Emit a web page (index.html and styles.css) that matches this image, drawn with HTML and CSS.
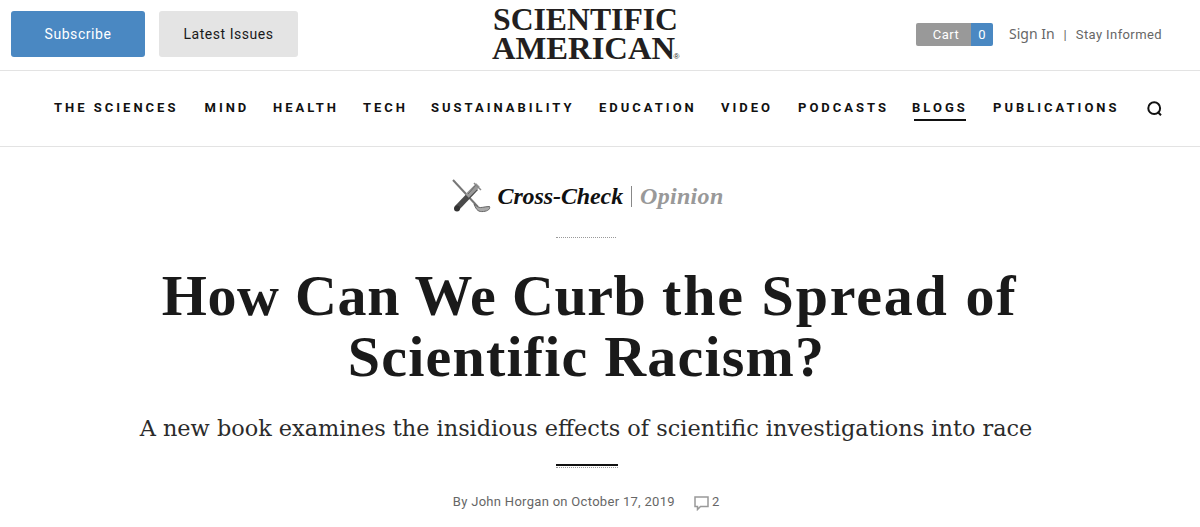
FILE: index.html
```html
<!DOCTYPE html>
<html lang="en">
<head>
    <meta charset="UTF-8">
    <meta name="viewport" content="width=device-width, initial-scale=1.0">
    <title>How Can We Curb the Spread of Scientific Racism? - Scientific American</title>
    <link rel="stylesheet" href="styles.css">
</head>
<body>
    <header class="top-bar">
        <div class="top-left">
            <a class="btn btn-subscribe">Subscribe</a>
            <a class="btn btn-issues">Latest Issues</a>
        </div>
        <svg class="logo" width="192" height="60" viewBox="0 0 192 60">
            <text x="3" y="26" font-size="32" textLength="185" lengthAdjust="spacingAndGlyphs">SCIENTIFIC</text>
            <text x="2" y="54.5" font-size="32" textLength="183" lengthAdjust="spacingAndGlyphs">AMERICAN</text>
            <text class="reg" x="183.5" y="55" font-size="8">®</text>
        </svg>
        <div class="top-right">
            <a class="cart"><span class="cart-label">Cart</span><span class="cart-count">0</span></a>
            <a class="sign-in">Sign In</a>
            <span class="divider">|</span>
            <a class="stay">Stay Informed</a>
        </div>
    </header>

    <nav class="main-nav">
        <a>The Sciences</a>
        <a>Mind</a>
        <a>Health</a>
        <a>Tech</a>
        <a>Sustainability</a>
        <a>Education</a>
        <a>Video</a>
        <a>Podcasts</a>
        <a><span class="active">Blogs</span></a>
        <a>Publications</a>
        <svg class="search" width="16" height="16" viewBox="0 0 16 16">
            <circle cx="7.2" cy="7.2" r="5.9"/>
            <path d="M10.6 10.8l3.4 3.4"/>
        </svg>
    </nav>

    <main class="article">
        <div class="blog-title">
            <svg class="sticks" width="40" height="36" viewBox="0 0 40 36">
                <path d="M2 2L27 29" stroke="#777" stroke-width="2"/>
                <path d="M6 30L25 10" stroke="#4a4a4a" stroke-width="5.5"/>
                <path d="M16 18L27 7" stroke="#999" stroke-width="5"/>
                <path d="M17 16L25 7" stroke="#666" stroke-width="1"/>
                <path d="M23 5L30 12" stroke="#888" stroke-width="1.5"/>
                <circle cx="6" cy="30.5" r="3" fill="#333"/>
                <path d="M23 26l4 3c3 1.500 6-.5 11.500-.5 1 2.500-1.500 4.500-6 5-5 .5-7-1-9.500-7.500z" fill="#aaa" stroke="#666" stroke-width="1"/>
            </svg>
            <span class="blog-name">Cross-Check</span>
            <span class="blog-bar"></span>
            <span class="blog-kind">Opinion</span>
        </div>
        <div class="rule-dotted"></div>
        <h1><span class="line-one">How Can We Curb <span class="wide">the Spread of</span></span><br><span class="line-two">Scientific Racism?</span></h1>
        <p class="subtitle">A new book examines the insidious effects of scientific investigations into race</p>
        <div class="rule-solid"></div>
        <div class="meta">
            <span class="byline">By John Horgan on October 17, 2019</span>
            <svg class="comment" width="15" height="15" viewBox="0 0 15 15">
                <path d="M1 1h13v9.500H6.500L3.500 13.500v-3H1z"/>
            </svg>
            <span class="count">2</span>
        </div>
    </main>
</body>
</html>
```
FILE: styles.css
```css
body {
    margin: 0;
    background: #fff;
    color: #1a1a1a;
    font-family: Roboto, "Liberation Sans", sans-serif;
    font-size: 14px;
    overflow: hidden;
}

.top-bar {
    height: 71px;
    box-sizing: border-box;
    display: grid;
    grid-template-columns: 490px 192px 1fr;
    padding: 0 38px 0 0;
    border-bottom: 1px solid #e3e3e3;
}

.top-left {
    display: flex;
    gap: 14px;
    padding: 11px 0 0 11px;
}

.btn {
    height: 46px;
    line-height: 46px;
    border-radius: 3px;
    text-align: center;
    font-size: 14px;
    letter-spacing: 0.55px;
}

.btn-subscribe {
    width: 134px;
    background: #4a88c2;
    color: #fff;
}

.btn-issues {
    width: 139px;
    background: #e4e4e4;
    color: #1a1a1a;
}

.logo {
    margin-top: 4px;
    overflow: visible;
    font-family: "Liberation Serif", serif;
    font-weight: bold;
    fill: #231f20;
}

.reg {
    font-family: "Liberation Sans", sans-serif;
    font-weight: normal;
}

.top-right {
    display: flex;
    justify-content: flex-end;
    align-items: center;
    height: 69px;
    color: #666;
    font-size: 13px;
}

.cart {
    display: flex;
    width: 77px;
    height: 23px;
    line-height: 23px;
    border-radius: 2px;
    overflow: hidden;
    color: #fff;
    margin-right: 16px;
}

.cart-label {
    width: 55px;
    padding-left: 5px;
    box-sizing: border-box;
    background: #999;
    text-align: center;
    letter-spacing: 0.5px;
}

.cart-count {
    width: 22px;
    background: #4a88c2;
    text-align: center;
}

.sign-in {
    font-family: "Noto Sans", sans-serif;
    font-size: 14px;
    line-height: 20px;
    padding-bottom: 2px;
}

.divider {
    margin: 0 9px;
}

.stay {
    letter-spacing: 0.4px;
}

.main-nav {
    display: grid;
    grid-template-columns: 150.5px 68.5px 90px 68px 168px 122px 77px 114px 81px 154px 16px;
    align-items: center;
    height: 75px;
    padding-left: 54px;
    border-bottom: 1px solid #e3e3e3;
    font-size: 13px;
    line-height: 15px;
    font-weight: bold;
    letter-spacing: 3px;
    text-transform: uppercase;
    white-space: nowrap;
    color: #111;
}

.main-nav a {
    padding-bottom: 2px;
}

.active {
    display: inline-block;
    position: relative;
}

.active::after {
    content: "";
    position: absolute;
    left: 2px;
    right: 2px;
    bottom: -6px;
    height: 2px;
    background: #111;
}

.search {
    fill: none;
    stroke: #111;
    stroke-width: 2;
}

.article {
    display: flex;
    flex-direction: column;
    align-items: center;
    padding-right: 28px;
}

.blog-title {
    display: flex;
    align-items: center;
    height: 40px;
    margin-top: 29px;
    padding-left: 3px;
    font-family: "Liberation Serif", serif;
    font-size: 24px;
    font-weight: bold;
    font-style: italic;
}

.sticks {
    fill: none;
    margin-right: 6px;
}

.blog-name {
    color: #111;
    letter-spacing: -0.1px;
}

.blog-bar {
    width: 1px;
    height: 21px;
    margin: 0 8px;
    background: #888;
}

.blog-kind {
    color: #999;
    letter-spacing: 0.3px;
}

.rule-dotted {
    width: 60px;
    margin-top: 21px;
    border-top: 1px dotted #999;
}

h1 {
    margin: 27px 0 0;
    font-family: "Liberation Serif", serif;
    font-size: 58px;
    line-height: 61px;
    font-weight: bold;
    text-align: center;
    white-space: nowrap;
}

.line-one {
    padding-left: 7px;
    letter-spacing: 0.6px;
    word-spacing: 0.5px;
}

.wide {
    letter-spacing: 1.8px;
}

.line-two {
    padding-left: 1px;
    letter-spacing: 1.2px;
}

.subtitle {
    margin: 27px 0 0;
    font-family: "DejaVu Serif", serif;
    font-size: 22.4px;
    line-height: 28px;
    color: #2b2b2b;
    white-space: nowrap;
}

.rule-solid {
    width: 62px;
    height: 1px;
    margin: 22px 0 0 2px;
    border-top: 2px solid #111;
    border-bottom: 1px dotted #999;
}

.meta {
    display: flex;
    align-items: center;
    margin-top: 25px;
    font-size: 13px;
    line-height: 18px;
    color: #666;
}

.byline {
    letter-spacing: 0.3px;
}

.comment {
    margin: 3px 3px 0 19px;
    fill: none;
    stroke: #999;
    stroke-width: 1.5;
}
```
